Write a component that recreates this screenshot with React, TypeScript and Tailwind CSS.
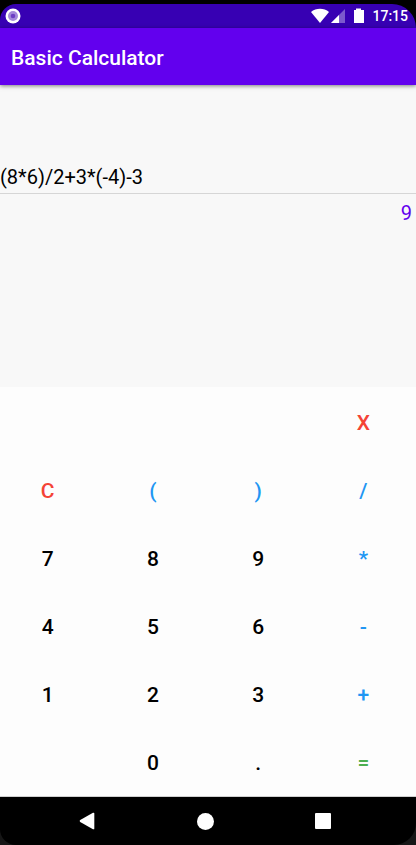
import { useState } from "react";

type Key = { label: string; name: string; tone: string } | null;

const RED = "text-[#f44336]";
const BLUE = "text-[#2196f3]";
const BLACK = "text-black";
const GREEN = "text-[#4caf50]";

const keys: Key[] = [
  null, null, null, { label: "X", name: "Delete last", tone: RED },
  { label: "C", name: "Clear", tone: RED },
  { label: "(", name: "Open bracket", tone: BLUE },
  { label: ")", name: "Close bracket", tone: BLUE },
  { label: "/", name: "Divide", tone: BLUE },
  { label: "7", name: "7", tone: BLACK },
  { label: "8", name: "8", tone: BLACK },
  { label: "9", name: "9", tone: BLACK },
  { label: "*", name: "Multiply", tone: BLUE },
  { label: "4", name: "4", tone: BLACK },
  { label: "5", name: "5", tone: BLACK },
  { label: "6", name: "6", tone: BLACK },
  { label: "-", name: "Subtract", tone: BLUE },
  { label: "1", name: "1", tone: BLACK },
  { label: "2", name: "2", tone: BLACK },
  { label: "3", name: "3", tone: BLACK },
  { label: "+", name: "Add", tone: BLUE },
  null,
  { label: "0", name: "0", tone: BLACK },
  { label: ".", name: "Decimal point", tone: BLACK },
  { label: "=", name: "Equals", tone: GREEN },
];

function StatusBar() {
  return (
    <div className="bg-black pt-1">
      <div className="flex h-6 items-center justify-between rounded-tl-[16px] rounded-tr-[24px] bg-[#3700b3] pr-2 pl-[5px]">
        <svg width="16" height="16" viewBox="0 0 16 16" aria-hidden="true">
          <circle cx="8" cy="8" r="7.5" fill="#fff" />
          <circle cx="8" cy="8" r="5" fill="#a58adb" />
          <circle cx="8" cy="8" r="2.3" fill="#6d3fc4" />
        </svg>
        <div className="flex items-center">
          <svg width="56" height="16" viewBox="0 0 56 16" fill="#fff" aria-hidden="true">
            <path d="M1 4C6 -0.2 14 -0.2 19 4L10 15Z" />
            <path d="M35 1V15H21Z" fillOpacity="0.35" />
            <path d="M29 7V15H21Z" />
            <path d="M44 2h2V0.5h5V2h3v13H44Z" />
          </svg>
          <span className="ml-1.5 text-[14px] leading-5 font-medium text-white">17:15</span>
        </div>
      </div>
    </div>
  );
}

function NavBar() {
  return (
    <nav className="bg-[#161616]">
      <div className="grid h-12 grid-cols-3 rounded-br-[22px] rounded-bl-[16px] bg-black pr-[34px] pl-7">
        <button type="button" aria-label="Back" className="flex items-center justify-center">
          <svg width="16" height="18" viewBox="0 0 16 18" fill="#fff">
            <path d="M14 0.8L1.2 8Q0 9 1.2 10L14 17.2Q15.3 17.6 15.3 16.4V1.6Q15.3 0.4 14 0.8Z" />
          </svg>
        </button>
        <button type="button" aria-label="Home" className="flex items-center justify-center">
          <span className="size-[17px] rounded-full bg-white" />
        </button>
        <button type="button" aria-label="Recent apps" className="flex items-center justify-center">
          <span className="size-4 rounded-[1px] bg-white" />
        </button>
      </div>
    </nav>
  );
}

export default function App() {
  const [expression, setExpression] = useState("(8*6)/2+3*(-4)-3");

  const press = (label: string) => {
    if (label === "C") setExpression("");
    else if (label === "X") setExpression((e) => e.slice(0, -1));
    else if (label !== "=") setExpression((e) => e + label);
  };

  return (
    <div className="flex min-h-screen flex-col overflow-hidden bg-[#f8f8f8] font-[Roboto,sans-serif]">
      <StatusBar />
      <header className="flex h-[57px] items-center bg-[#6200ee] px-[11px] pt-0.5 shadow-[0_1px_4px_rgba(0,0,0,0.5)]">
        <h1 className="text-[21px] leading-7 font-medium text-white">Basic Calculator</h1>
      </header>
      <main className="flex flex-1 flex-col">
        <div className="flex-1 pt-[76px]">
          <input
            aria-label="Expression"
            value={expression}
            onChange={(e) => setExpression(e.target.value)}
            className="block h-[33px] w-full border-b border-[#d6d6d6] bg-transparent text-[20px] text-black outline-none"
          />
          <output className="block px-1 pt-[5px] text-right text-[20px] leading-7 text-[#6200ee]">9</output>
        </div>
        <div className="bg-[#fdfdfd] pt-0.5 shadow-[inset_0_-1px_0_#d0d0d0]">
          <div className="-ml-[5px] grid grid-cols-4">
            {keys.map((key, i) =>
              key ? (
                <button
                  key={i}
                  type="button"
                  aria-label={key.name}
                  onClick={() => press(key.label)}
                  className={`h-17 text-[21px] leading-7 font-medium ${key.tone}`}
                >
                  {key.label}
                </button>
              ) : (
                <span key={i} className="h-17" />
              ),
            )}
          </div>
        </div>
      </main>
      <NavBar />
    </div>
  );
}
